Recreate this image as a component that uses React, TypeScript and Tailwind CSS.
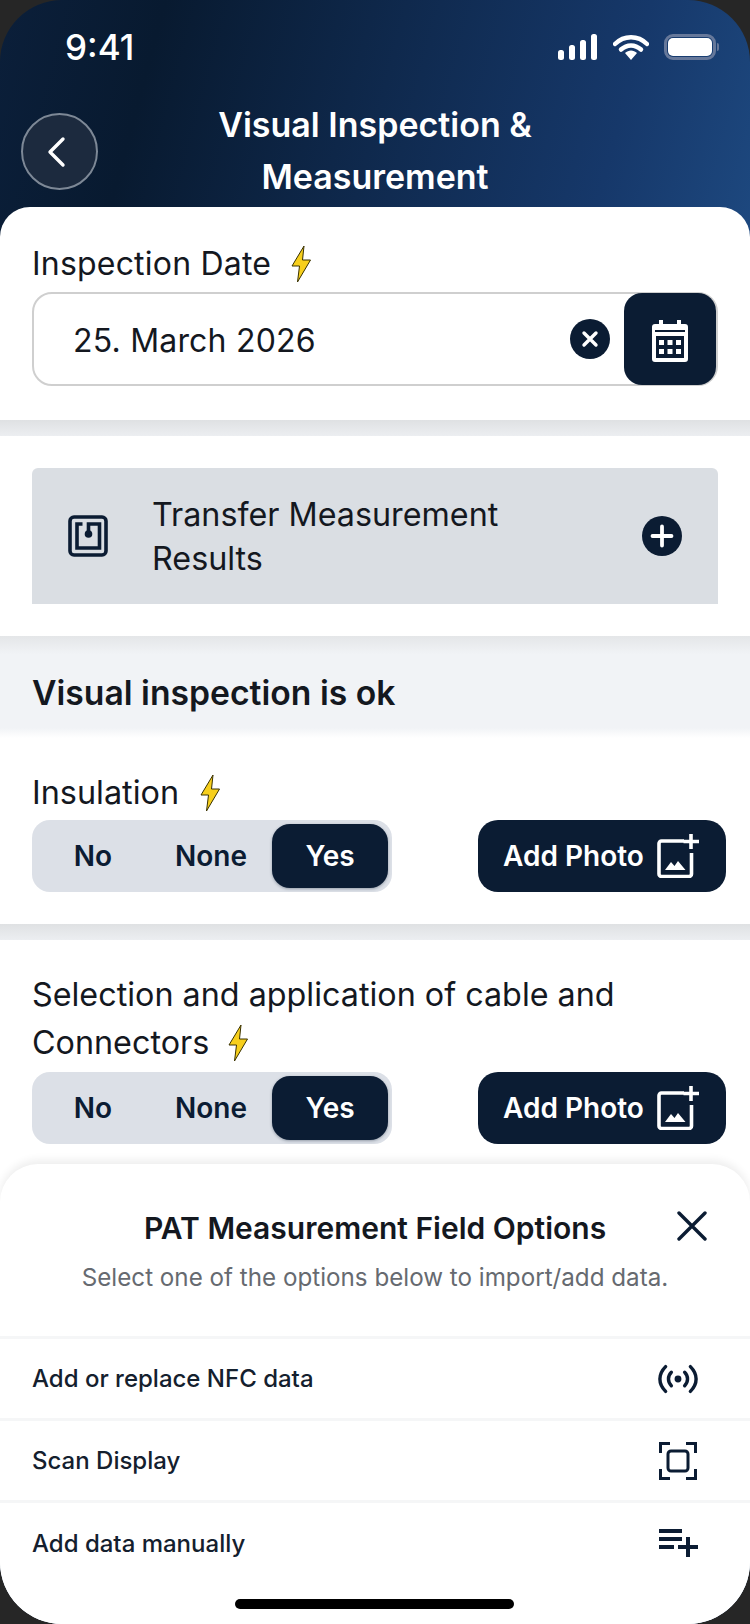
import React from "react";

const NAVY = "#0b1c33";

function Bolt() {
  return (
    <svg width="22" height="38" viewBox="0 0 22 38" className="shrink-0">
      <path d="M14 1 L2 21 L9.5 21 L7.5 37 L20.5 15 L12.5 15 Z" fill="#f7cf1c" stroke="#3a3200" strokeWidth="1" strokeLinejoin="round" />
    </svg>
  );
}

function AddPhotoIcon() {
  return (
    <svg width="44" height="44" viewBox="0 0 44 44" fill="none" className="shrink-0">
      <path d="M28 7 H5.5 A2.5 2.5 0 0 0 3 9.5 V40 A2.5 2.5 0 0 0 5.5 42.5 H33 A2.5 2.5 0 0 0 35.5 40 V19" stroke="#fff" strokeWidth="3.6" />
      <path d="M35 0 V15 M27.5 7.5 H43" stroke="#fff" strokeWidth="3.6" />
      <path d="M9 36 L15 28 L18.5 32 L22 27 L29.5 36 Z" fill="#fff" />
    </svg>
  );
}

function Segmented() {
  return (
    <div className="flex h-[72px] w-[360px] items-center rounded-[18px] bg-[#dce0e7] p-1 text-[28px] font-semibold text-[#0b1c33]">
      <div className="w-[114px] text-center">No</div>
      <div className="w-[122px] text-center">None</div>
      <div className="flex h-[64px] w-[116px] items-center justify-center rounded-[18px] bg-[#0b1c33] text-white shadow-[0_1px_3px_rgba(11,28,51,0.35)]">Yes</div>
    </div>
  );
}

function ControlRow() {
  return (
    <div className="flex items-center justify-between pr-[24px]">
      <Segmented />
      <div className="flex h-[72px] w-[248px] items-center rounded-[20px] bg-[#0b1c33] pl-[25px] text-[28px] font-semibold text-white">
        <span>Add Photo</span>
        <span className="ml-[12px] flex"><AddPhotoIcon /></span>
      </div>
    </div>
  );
}

function Gap() {
  return <div className="h-[16px] bg-[linear-gradient(#dfe1e3,#eceef1)]" />;
}

function OptionRow({ label, icon, last }: { label: string; icon: React.ReactNode; last?: boolean }) {
  return (
    <div className={`flex h-[82px] items-center justify-between pl-[32px] pr-[52px] ${last ? "" : "border-b-[3px] border-[#f5f6f7]"}`}>
      <span className="text-[24px] font-[450] text-[#14202e]">{label}</span>
      <span className="flex h-[44px] w-[40px] items-center justify-center">{icon}</span>
    </div>
  );
}

export default function App() {
  return (
    <div className="h-[1624px] w-[750px] bg-[#262626] font-['Inter',sans-serif]">
      <div className="relative flex h-full w-full flex-col overflow-hidden rounded-[62px] bg-[linear-gradient(105deg,#0b1f3a_0%,#081a30_14%,#16386a_55%,#1f4c84_72%)]">
        {/* status bar */}
        <div className="flex h-[92px] shrink-0 items-center justify-between pl-[65px] pr-[31px] pt-[2px] text-white">
          <span className="text-[35px] font-medium leading-none">9:41</span>
          <div className="flex items-center">
            <svg width="40" height="26" viewBox="0 0 40 26" className="mr-[15px]">
              <rect x="0" y="16" width="6" height="10" rx="2.5" fill="#fff" />
              <rect x="11" y="11" width="6" height="15" rx="2.5" fill="#fff" />
              <rect x="22" y="6" width="6" height="20" rx="2.5" fill="#fff" />
              <rect x="33" y="0" width="6" height="26" rx="2.5" fill="#fff" />
            </svg>
            <svg width="36" height="26" viewBox="0 0 36 26" fill="none" className="mr-[15px]">
              <path d="M2 10 C11 1 25 1 34 10" stroke="#fff" strokeWidth="4.5" strokeLinecap="round" />
              <path d="M8 15.5 C14 10 22 10 28 15.5" stroke="#fff" strokeWidth="4.5" strokeLinecap="round" />
              <path d="M12 19 C15.5 15.5 20.5 15.5 24 19 L18 26 Z" fill="#fff" />
            </svg>
            <div className="flex items-center">
              <div className="flex h-[26px] w-[52px] items-center justify-center rounded-[9px] border-[3px] border-[#66789a]">
                <div className="h-[18px] w-[44px] rounded-[5px] bg-white" />
              </div>
              <div className="ml-[1px] h-[8px] w-[2px] rounded-r bg-[#66789a]" />
            </div>
          </div>
        </div>

        {/* header */}
        <div className="flex h-[115px] shrink-0 items-start pl-[21px]">
          <div className="mt-[21px] flex h-[77px] w-[77px] shrink-0 items-center justify-center rounded-full border-2 border-[#7d8896] bg-[#1c2a3e] pr-[8px]">
            <svg width="24" height="32" viewBox="0 0 24 32" fill="none">
              <path d="M19 3 L6 16 L19 29" stroke="#fff" strokeWidth="3.4" strokeLinecap="round" strokeLinejoin="round" />
            </svg>
          </div>
          <div className="ml-[-98px] mt-[7px] w-[750px] shrink-0 text-center text-[34px] font-semibold leading-[52px] text-white">
            Visual Inspection &amp;<br />Measurement
          </div>
        </div>

        {/* content */}
        <div className="flex-1 overflow-hidden rounded-t-[30px] bg-white text-[#14181f]">
          <section className="h-[213px] pl-[32px] pr-[32px] pt-[36px]">
            <div className="flex h-[42px] items-center gap-[19px] text-[32px] leading-none tracking-[0.2px]">
              Inspection Date <Bolt />
            </div>
            <div className="mt-[7px] flex h-[94px] items-center rounded-[20px] border-2 border-[#cfcfcf] pl-[39px]">
              <span className="flex-1 pt-[3px] text-[32px] tracking-[0.2px]">25. March 2026</span>
              <svg width="40" height="40" viewBox="0 0 40 40" className="mr-[14px] shrink-0">
                <circle cx="20" cy="20" r="20" fill={NAVY} />
                <path d="M14 14 L26 26 M26 14 L14 26" stroke="#fff" strokeWidth="3.4" strokeLinecap="round" />
              </svg>
              <div className="flex h-[92px] w-[92px] shrink-0 items-center justify-center rounded-[18px] bg-[#0b1c33] pt-[3px]">
                <svg width="38" height="42" viewBox="0 0 38 42">
                  <path fillRule="evenodd" d="M8 0 H12 V4 H26 V0 H30 V4 H34 A3 3 0 0 1 37 7 V39 A3 3 0 0 1 34 42 H4 A3 3 0 0 1 1 39 V7 A3 3 0 0 1 4 4 H8 Z M4 10 V12 H34 V10 Z M5 16 V38 H33 V16 Z" fill="#fff" />
                  <path d="M8 20 H13 V25 H8 Z M16.5 20 H21.5 V25 H16.5 Z M25 20 H30 V25 H25 Z M8 29 H13 V34 H8 Z M16.5 29 H21.5 V34 H16.5 Z M25 29 H30 V34 H25 Z" fill="#fff" />
                </svg>
              </div>
            </div>
          </section>
          <Gap />
          <section className="h-[200px] pl-[32px] pr-[32px] pt-[32px]">
            <div className="flex h-[136px] items-center rounded-t-[6px] bg-[#dadee3] pl-[36px] pr-[36px]">
              <svg width="40" height="42" viewBox="0 0 40 42" fill="none" className="shrink-0">
                <rect x="2" y="2" width="36" height="38" rx="4" stroke={NAVY} strokeWidth="3.6" />
                <path d="M14.5 9 H9 V33 H31.5 V9 H20.5 V18" stroke={NAVY} strokeWidth="3.6" />
                <circle cx="20.5" cy="19" r="3.8" fill={NAVY} />
              </svg>
              <div className="ml-[44px] flex-1 pt-[1px] text-[32.3px] leading-[44px] text-[#14181f]">Transfer Measurement<br />Results</div>
              <svg width="40" height="40" viewBox="0 0 40 40" className="shrink-0">
                <circle cx="20" cy="20" r="20" fill={NAVY} />
                <path d="M20 10.5 V29.5 M10.5 20 H29.5" stroke="#fff" strokeWidth="3.8" strokeLinecap="round" />
              </svg>
            </div>
          </section>
          <section className="flex h-[102px] items-center bg-[linear-gradient(#e4e6e8,#f1f3f6_18%,#f1f3f6_90%,#ffffff)] pl-[32px] pt-[12px] text-[33.7px] font-semibold">
            Visual inspection is ok
          </section>
          <section className="h-[186px] pl-[32px] pt-[32px]">
            <div className="flex h-[46px] items-center gap-[20px] text-[32.4px] leading-none">
              Insulation <Bolt />
            </div>
            <div className="mt-[4px]"><ControlRow /></div>
          </section>
          <Gap />
          <section className="pl-[32px] pt-[31px]">
            <div className="text-[32.3px] leading-[48px]">Selection and application of cable and</div>
            <div className="flex h-[48px] items-center gap-[18px] text-[32.3px]">Connectors <Bolt /></div>
            <div className="mt-[5px]"><ControlRow /></div>
          </section>
        </div>

        {/* bottom sheet */}
        <div className="absolute inset-x-0 bottom-0 h-[460px] rounded-t-[38px] bg-white shadow-[0_-4px_8px_rgba(0,0,0,0.07)]">
          <div className="relative h-[175px] border-b-[3px] border-[#f5f6f7] text-center">
            <div className="pt-[44px] text-[30px] font-semibold leading-[40px] text-[#14181f]">PAT Measurement Field Options</div>
            <div className="mt-[14px] text-[24.2px] leading-[32px] text-[#666a70]">Select one of the options below to import/add data.</div>
            <svg width="30" height="30" viewBox="0 0 30 30" className="absolute right-[43px] top-[47px]">
              <path d="M2 2 L28 28 M28 2 L2 28" stroke={NAVY} strokeWidth="3.4" strokeLinecap="round" />
            </svg>
          </div>
          <OptionRow
            label="Add or replace NFC data"
            icon={
              <svg width="42" height="30" viewBox="0 0 42 30" fill="none" stroke={NAVY} strokeWidth="3.6" strokeLinecap="round">
                <path d="M8 2 C0 10 0 20 8 28" />
                <path d="M14 8 C10 12 10 18 14 22" />
                <path d="M28 8 C32 12 32 18 28 22" />
                <path d="M34 2 C42 10 42 20 34 28" />
                <circle cx="21" cy="15" r="3.6" fill={NAVY} stroke="none" />
              </svg>
            }
          />
          <OptionRow
            label="Scan Display"
            icon={
              <svg width="38" height="38" viewBox="0 0 38 38" fill="none" stroke={NAVY} strokeWidth="3">
                <path d="M1.5 11 V1.5 H11 M27 1.5 H36.5 V11 M36.5 27 V36.5 H27 M11 36.5 H1.5 V27" />
                <rect x="9" y="9" width="20" height="20" rx="3" />
              </svg>
            }
          />
          <OptionRow
            last
            label="Add data manually"
            icon={
              <svg width="40" height="30" viewBox="0 0 40 30" fill={NAVY}>
                <rect x="1" y="0" width="23" height="4" />
                <rect x="1" y="8" width="23" height="4" />
                <rect x="1" y="16" width="15" height="4" />
                <rect x="20" y="16" width="20" height="4" />
                <rect x="28" y="8" width="4" height="20" />
              </svg>
            }
          />
          <div className="absolute bottom-[15px] left-[235px] h-[10px] w-[279px] rounded-full bg-black" />
        </div>
      </div>
    </div>
  );
}
